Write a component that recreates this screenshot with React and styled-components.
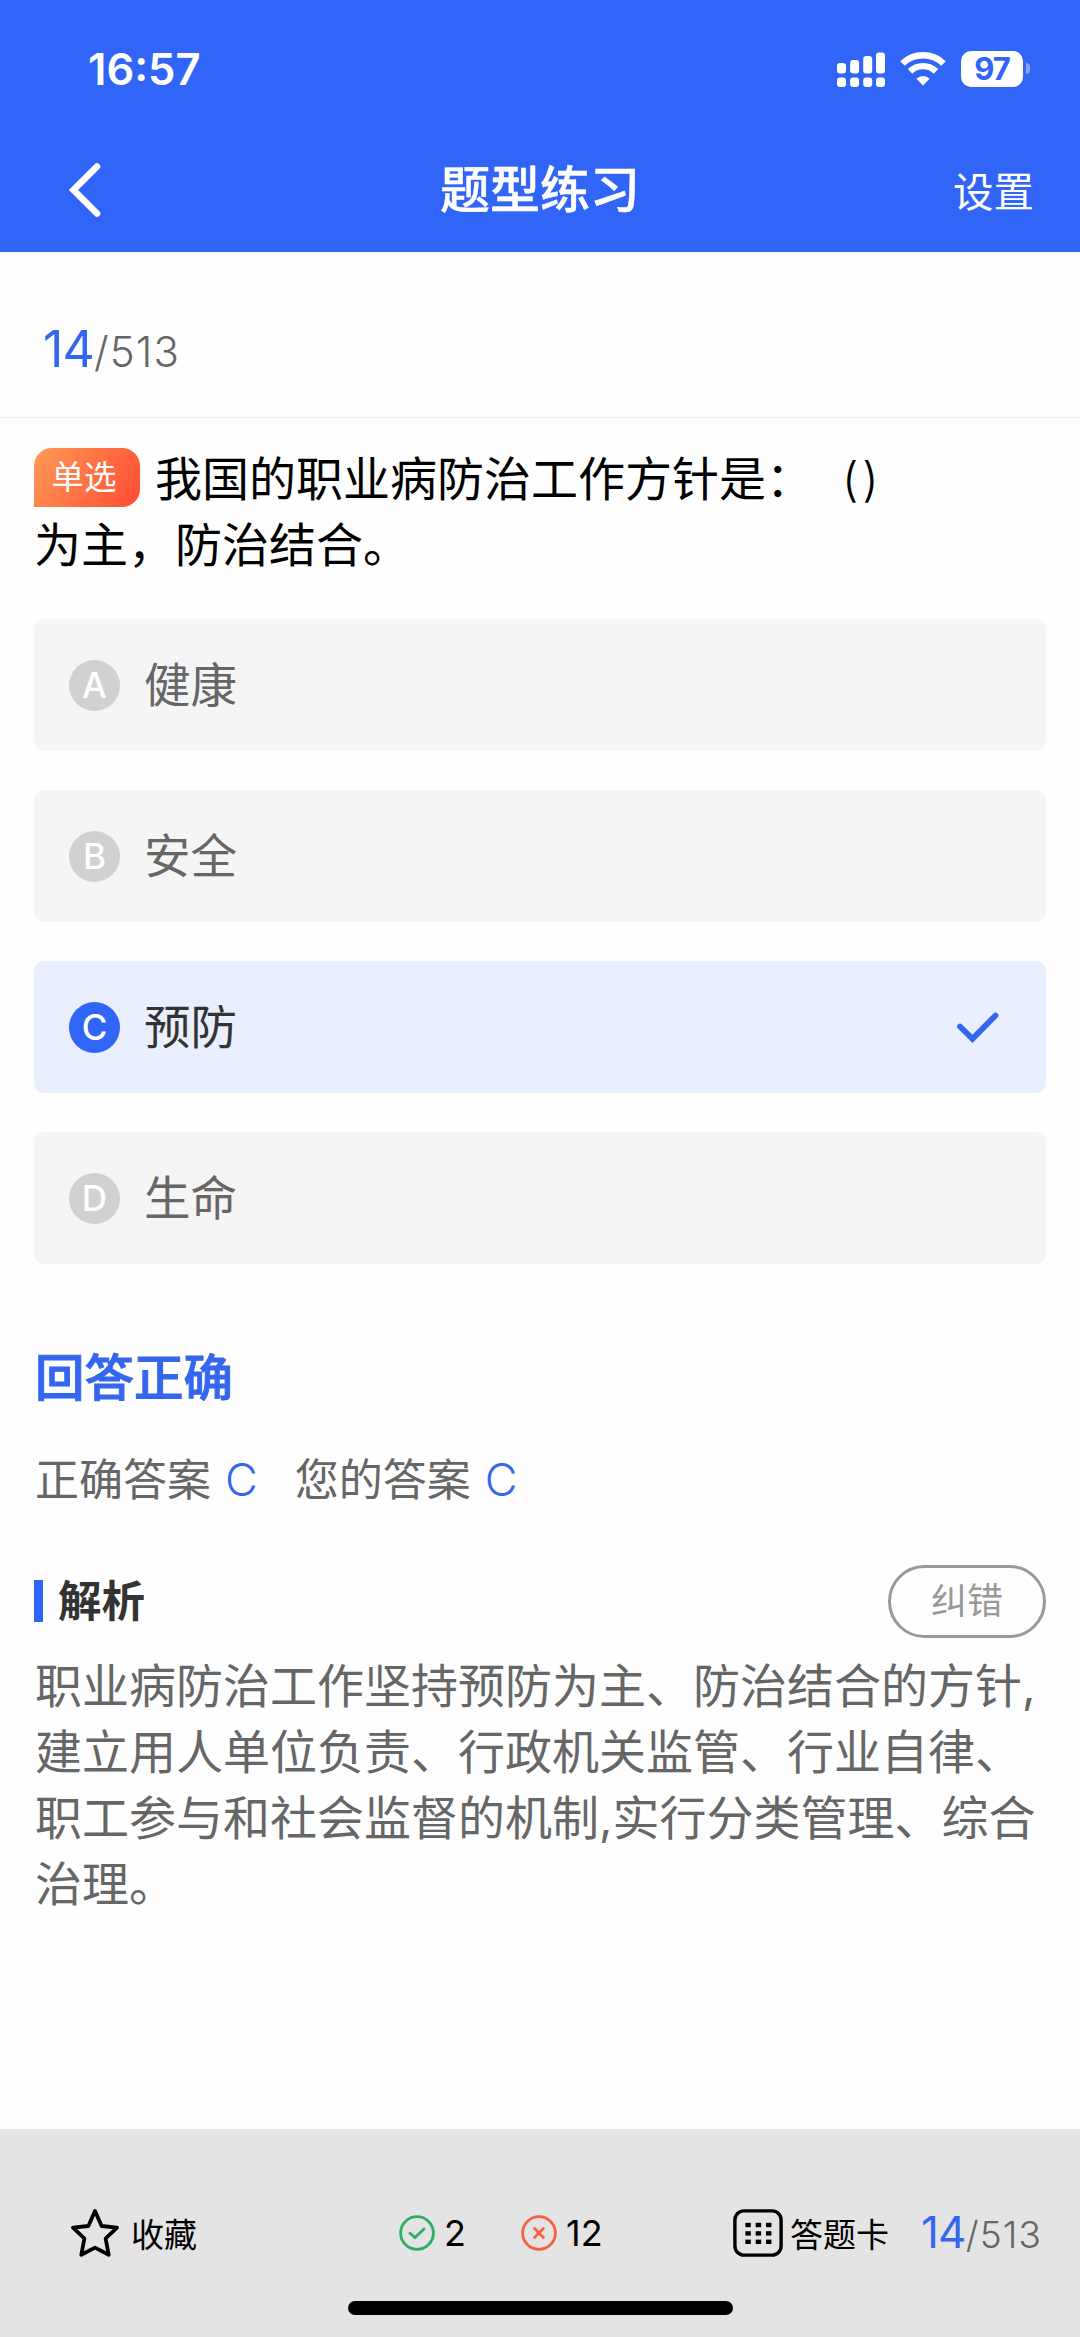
import React, { useState } from 'react';
import styled, { createGlobalStyle } from 'styled-components';

const blue = '#3165f8',
    textblue = '#3567ee',
    optionbgc = '#f5f5f5',
    optionselected = '#e9effe',
    gray = '#666',
    footerbgc = '#e4e4e4'

const options = [
    { key: 'A', text: '健康' },
    { key: 'B', text: '安全' },
    { key: 'C', text: '预防' },
    { key: 'D', text: '生命' },
]

const answer = 'C'

export default function App(){
    const [picked, setPicked] = useState('C')

    return (
        <Page>
            <GlobalStyle/>
            <Header>
                <StatusBar>
                    <Clock>16:57</Clock>
                    <StatusIcons>
                        <SignalIcon/>
                        <WifiIcon/>
                        <Battery><BatteryLevel>97</BatteryLevel><BatteryCap/></Battery>
                    </StatusIcons>
                </StatusBar>
                <NavBar>
                    <BackIcon/>
                    <Title>题型练习</Title>
                    <Settings>设置</Settings>
                </NavBar>
            </Header>

            <Progress>
                <Counter $size={50} $small={42}><b>14</b>/513</Counter>
            </Progress>

            <Main>
                <Question>
                    <Tag>单选</Tag>我国的职业病防治工作方针是：<Blank>()</Blank><br/>
                    为主，防治结合。
                </Question>

                <Options>
                    {options.map(o => (
                        <Option key={o.key} $active={o.key === picked} onClick={()=>setPicked(o.key)}>
                            <Letter $active={o.key === picked}>{o.key}</Letter>
                            <OptionText>{o.text}</OptionText>
                            {o.key === picked && <CheckIcon/>}
                        </Option>
                    ))}
                </Options>

                <Result>回答正确</Result>
                <Answers>
                    <Answer>正确答案<em>{answer}</em></Answer>
                    <Answer>您的答案<em>{picked}</em></Answer>
                </Answers>

                <AnalysisHead>
                    <AnalysisTitle>解析</AnalysisTitle>
                    <ReportButton>纠错</ReportButton>
                </AnalysisHead>
                <Analysis>
                    职业病防治工作坚持预防为主、防治结合的方针,<br/>
                    建立用人单位负责、行政机关监管、行业自律、<br/>
                    职工参与和社会监督的机制,实行分类管理、综合<br/>
                    治理。
                </Analysis>
            </Main>

            <Footer>
                <Tools>
                    <Favorite><StarIcon/>收藏</Favorite>
                    <Score><RightIcon/>2</Score>
                    <Score><WrongIcon/>12</Score>
                    <Card><GridIcon/>答题卡</Card>
                    <Counter $size={44} $small={37}><b>14</b>/513</Counter>
                </Tools>
                <HomeIndicator/>
            </Footer>
        </Page>
    )
}

function SignalIcon(){
    return (
        <svg width="48" height="36" viewBox="0 0 48 36" fill="#fff">
            <rect x="0" y="12" width="9" height="10.5" rx="3"/>
            <rect x="13.1" y="9" width="9" height="13.5" rx="3"/>
            <rect x="26.2" y="5" width="9" height="17.5" rx="3"/>
            <rect x="39" y="1.5" width="9" height="21" rx="3"/>
            <rect x="0" y="26.5" width="9" height="9.5" rx="3"/>
            <rect x="13.1" y="26.5" width="9" height="9.5" rx="3"/>
            <rect x="26.2" y="26.5" width="9" height="9.5" rx="3"/>
            <rect x="39" y="26.5" width="9" height="9.5" rx="3"/>
        </svg>
    )
}

function WifiIcon(){
    return (
        <svg width="46" height="36" viewBox="0 0 46 36" fill="none" stroke="#fff">
            <path d="M2.5 12.5 A29.5 29.5 0 0 1 43.5 12.5" strokeWidth="6.6"/>
            <path d="M10 20.4 A18.6 18.6 0 0 1 36 20.4" strokeWidth="6.4"/>
            <path d="M23 34.5 L16.4 27.7 A9.4 9.4 0 0 1 29.6 27.7 Z" fill="#fff" stroke="none"/>
        </svg>
    )
}

function BackIcon(){
    return (
        <svg width="36" height="60" viewBox="0 0 36 60" fill="none" stroke="#fff" strokeWidth="6.6" strokeLinecap="round">
            <path d="M31 6.5 L7.5 30 L31 53.5"/>
        </svg>
    )
}

function CheckIcon(){
    return (
        <svg width="42" height="32" viewBox="0 0 42 32" fill="none" stroke={textblue} strokeWidth="5.8" strokeLinecap="round">
            <path d="M3 15.5 L15.5 27.8 L38.5 4.5"/>
        </svg>
    )
}

function StarIcon(){
    return (
        <svg width="50" height="50" viewBox="0 0 50 50" fill="none" stroke="#000" strokeWidth="3.8" strokeLinejoin="round">
            <path d="M25 3 L31.6 18 L47 19.6 L35.6 30.5 L38.7 46.8 L25 39.6 L11.3 46.8 L14.4 30.5 L3 19.6 L18.4 18 Z"/>
        </svg>
    )
}

function RightIcon(){
    return (
        <svg width="36" height="36" viewBox="0 0 36 36" fill="none" stroke="#2eae66" strokeWidth="2.8" strokeLinecap="round">
            <circle cx="18" cy="18" r="16.4"/>
            <path d="M11 18.2 L16 22.6 L25 14"/>
        </svg>
    )
}

function WrongIcon(){
    return (
        <svg width="36" height="36" viewBox="0 0 36 36" fill="none" stroke="#f6623f" strokeWidth="2.8" strokeLinecap="round">
            <circle cx="18" cy="18" r="16.4"/>
            <path d="M13.6 13.6 L22.4 22.4 M22.4 13.6 L13.6 22.4"/>
        </svg>
    )
}

function GridIcon(){
    const dots = [0, 1, 2]
    return (
        <svg width="50" height="48" viewBox="0 0 50 48">
            <rect x="1.9" y="1.9" width="46.2" height="44.2" rx="9" fill="none" stroke="#000" strokeWidth="3.4"/>
            {dots.map(r => dots.map(c => (
                <rect key={`${r}${c}`} x={12.4 + c * 10.3} y={13.8 + r * 8.4} width="5.4" height="4.4" fill="#000"/>
            )))}
        </svg>
    )
}

const GlobalStyle = createGlobalStyle`
    * {
        box-sizing: border-box;
    }

    body{
        margin: 0;
        background-color: #fefefe;
        font-family: Inter, 'Noto Sans CJK SC', sans-serif;
    }

    svg{
        display: block;
        flex: none;
    }
`

const Page = styled.div`
    display: flex;
    flex-direction: column;
    width: 1080px;
    height: 2337px;
    overflow: hidden;
`

const Header = styled.header`
    height: 252px;
    flex: none;
    color: #fff;
    background-color: ${blue};
`

const StatusBar = styled.div`
    display: flex;
    justify-content: space-between;
    align-items: center;
    height: 137px;
    padding: 0 50px 0 88px;
`

const Clock = styled.div`
    font-size: 43.5px;
    font-weight: 600;
`

const StatusIcons = styled.div`
    display: flex;
    align-items: center;
    gap: 15px;
`

const Battery = styled.div`
    display: flex;
    align-items: center;
    gap: 3px;
`

const BatteryLevel = styled.div`
    width: 62px;
    height: 36px;
    line-height: 36px;
    border-radius: 10px;
    text-align: center;
    font-size: 31px;
    font-weight: 700;
    letter-spacing: -1px;
    color: ${blue};
    background-color: #fff;
`

const BatteryCap = styled.div`
    width: 4px;
    height: 11px;
    border-radius: 0 5px 5px 0;
    background-color: #84a4fb;
`

const NavBar = styled.nav`
    display: grid;
    grid-template-columns: 1fr auto 1fr;
    align-items: center;
    height: 106px;
    padding: 0 46px 0 66px;
`

const Title = styled.h1`
    margin: 0 0 0 -20px;
    font-size: 50px;
    font-weight: 500;
    line-height: 60px;
    -webkit-text-stroke: 0.5px #fff;
`

const Settings = styled.div`
    justify-self: end;
    margin-top: 5px;
    font-size: 40.5px;
    line-height: 50px;
`

const Progress = styled.div`
    flex: none;
    height: 166px;
    padding: 65px 43px 0;
    border-bottom: 1px solid #f0f0f0;
`

const Counter = styled.div`
    font-size: ${props => props.$small}px;
    line-height: 64px;
    letter-spacing: 1.1px;
    color: ${gray};
    font-weight: 350;
    white-space: nowrap;

    b{
        font-size: ${props => props.$size}px;
        font-weight: 400;
        letter-spacing: -0.8px;
        color: ${textblue};
    }
`

const Main = styled.main`
    flex: 1;
    padding: 28px 34px 0;
`

const Question = styled.div`
    font-size: 47px;
    line-height: 66px;
    height: 173px;
    color: #000;
    white-space: nowrap;
`

const Tag = styled.span`
    display: inline-block;
    width: 106px;
    height: 59px;
    line-height: 59px;
    margin: 2px 15px 0 0;
    padding-right: 6px;
    vertical-align: top;
    text-align: center;
    border-radius: 18px 18px 18px 0;
    font-size: 32.5px;
    color: #fff;
    background-image: linear-gradient(120deg, #ff9a56, #ff4b33);
`

const Blank = styled.span`
    margin-left: 29px;
    letter-spacing: 4px;
    font-weight: 350;
`

const Options = styled.div`
    display: flex;
    flex-direction: column;
    gap: 39px;
`

const Option = styled.div`
    display: flex;
    align-items: center;
    height: 132px;
    padding: 0 47px 0 35px;
    border-radius: 10px;
    color: ${props => props.$active ? '#333' : gray};
    background-color: ${props => props.$active ? optionselected : optionbgc};
`

const Letter = styled.div`
    width: 51px;
    height: 51px;
    line-height: 51px;
    border-radius: 50%;
    text-align: center;
    font-size: 35px;
    font-weight: 500;
    color: #fff;
    background-color: ${props => props.$active ? blue : '#d1d1d1'};
`

const OptionText = styled.div`
    flex: 1;
    margin-left: 24px;
    font-size: 46.5px;
    line-height: 60px;
`

const Result = styled.h2`
    margin: 81.5px 0 0 1px;
    font-size: 49.5px;
    font-weight: 500;
    line-height: 64px;
    color: ${textblue};
    -webkit-text-stroke: 1px ${textblue};
`

const Answers = styled.div`
    display: flex;
    gap: 37px;
    margin: 38px 0 0 1px;
    font-size: 44px;
    line-height: 64px;
    color: ${gray};
`

const Answer = styled.div`
    em{
        margin-left: 14px;
        font-size: 45px;
        font-style: normal;
        font-weight: 350;
        color: ${textblue};
    }
`

const AnalysisHead = styled.div`
    display: flex;
    justify-content: space-between;
    align-items: center;
    margin-top: 53px;
`

const AnalysisTitle = styled.h3`
    margin: 0;
    height: 42px;
    line-height: 42px;
    padding-left: 15px;
    border-left: 9px solid ${blue};
    font-size: 43.5px;
    font-weight: 700;
    color: #333;
`

const ReportButton = styled.button`
    width: 158px;
    height: 73px;
    padding: 0;
    border: 3px solid #999;
    border-radius: 37px;
    background: none;
    font-family: inherit;
    font-size: 36px;
    line-height: 60px;
    color: #999;
`

const Analysis = styled.p`
    margin: 15px 0 0 1px;
    font-size: 47px;
    line-height: 66px;
    color: ${gray};
    white-space: nowrap;
`

const Footer = styled.footer`
    flex: none;
    height: 208px;
    padding-top: 79px;
    background-color: ${footerbgc};
`

const Tools = styled.div`
    display: flex;
    align-items: center;
    height: 50px;
    padding-left: 70px;
    color: #000;
`

const Favorite = styled.div`
    display: flex;
    align-items: center;
    gap: 11px;
    width: 329px;
    font-size: 33px;
`

const Score = styled.div`
    display: flex;
    align-items: center;
    gap: 9px;
    width: 122px;
    font-size: 36px;
`

const Card = styled.div`
    display: flex;
    align-items: center;
    gap: 7px;
    width: 188px;
    margin-left: 90px;
    font-size: 33px;
`

const HomeIndicator = styled.div`
    width: 385px;
    height: 14px;
    margin: 43px auto 0;
    border-radius: 7px;
    background-color: #000;
`
